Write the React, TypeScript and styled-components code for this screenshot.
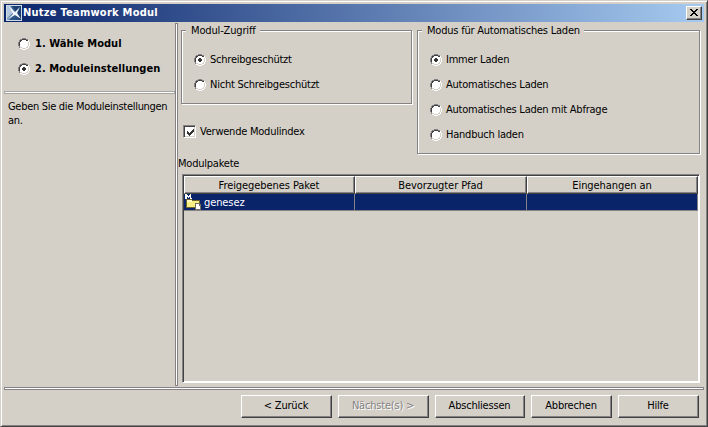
import React from 'react';
import styled, { createGlobalStyle, css } from 'styled-components';

const face = '#d4d0c8';
const shadow = '#848284';
const dark = '#424142';
const navy = '#0a246a';

const GlobalStyle = createGlobalStyle`
  *, *::before, *::after { box-sizing: border-box; }
  body { margin: 0; overflow: hidden; }
`;

const Window = styled.div`
  display: flex;
  flex-direction: column;
  width: 708px;
  height: 427px;
  padding: 2px;
  background: ${face};
  border: 1px solid ${face};
  border-right-color: ${dark};
  border-bottom-color: ${dark};
  box-shadow: inset 1px 1px #fff, inset -1px -1px ${shadow};
  font: 11px/13px "DejaVu Sans Condensed", "DejaVu Sans", sans-serif;
  letter-spacing: -0.22px;
  color: #000;
  cursor: default;
`;

const TitleBar = styled.header`
  display: flex;
  align-items: center;
  flex: none;
  height: 18px;
  margin: 1px 0 0 1px;
  width: 700px;
  padding: 0 2px;
  background: linear-gradient(90deg, ${navy}, #a6caf0);
`;

const Title = styled.h1`
  flex: 1;
  margin: 0 0 0 1px;
  font: bold 11px/14px "DejaVu Sans Condensed", "DejaVu Sans", sans-serif;
  letter-spacing: 0.25px;
  color: #fff;
`;

const raised = css`
  background: ${face};
  border: 1px solid;
  border-color: #fff ${dark} ${dark} #fff;
  box-shadow: inset -1px -1px ${shadow};
`;

const CloseButton = styled.button`
  display: grid;
  place-items: center;
  width: 16px;
  height: 14px;
  padding: 0 1px 1px 0;
  ${raised}
`;

const Body = styled.div`
  display: grid;
  grid-template-columns: 171px 3px 1fr;
  flex: none;
  height: 364px;
  margin: 1px 0 0 1px;
`;

const Sidebar = styled.aside`
  display: flex;
  flex-direction: column;
`;

const Steps = styled.div`
  display: flex;
  flex-direction: column;
  gap: 12px;
  height: 68px;
  padding: 14px 0 0 14px;
`;

const Hint = styled.p`
  margin: 0;
  padding: 6px 0 0 4px;
  line-height: 14px;
  letter-spacing: -0.3px;
`;

const Rule = styled.hr<{ $vertical?: boolean }>`
  flex: none;
  margin: 0;
  border: 1px solid ${shadow};
  background: #fff;
  ${(p) => (p.$vertical ? 'width: 3px; height: 363px;' : 'height: 3px; width: 100%;')}
`;

const StepRule = styled(Rule)`
  border-color: #a5a5a3;
`;

const BottomRule = styled(Rule)`
  width: 700px;
  margin-left: 1px;
`;

const Main = styled.main`
  display: flex;
  flex-direction: column;
  padding: 7px 0 0 3px;
`;

const Options = styled.div`
  display: grid;
  grid-template-columns: 231px 283px;
  column-gap: 5px;
`;

const Column = styled.div`
  display: flex;
  flex-direction: column;
`;

const Group = styled.section<{ $height: number }>`
  height: ${(p) => p.$height}px;
  border: 1px solid ${shadow};
  box-shadow: 1px 1px #fff, inset 1px 1px #fff;
  padding: 0 0 0 12px;
`;

const Legend = styled.h2<{ $spacing?: number }>`
  width: max-content;
  height: 14px;
  margin: -7px 0 15px -8px;
  padding: 0 4px 0 5px;
  background: ${face};
  font: inherit;
  line-height: 14px;
  letter-spacing: ${(p) => p.$spacing ?? -0.22}px;
`;

const OptionList = styled.div`
  display: flex;
  flex-direction: column;
  gap: 12px;
`;

const Choice = styled.label<{ $bold?: boolean }>`
  display: flex;
  align-items: center;
  gap: ${(p) => (p.$bold ? 5 : 4)}px;
  height: 13px;
  white-space: nowrap;
  font-weight: ${(p) => (p.$bold ? 'bold' : 'normal')};
  letter-spacing: ${(p) => (p.$bold ? 0.04 : -0.23)}px;
`;

const IndexChoice = styled(Choice)`
  margin: 21px 0 0 2px;
`;

const Check = styled.span`
  display: grid;
  place-items: center;
  width: 13px;
  height: 13px;
  padding: 1px 0 0 1px;
  background: #fff;
  border: 1px solid;
  border-color: ${shadow} #fff #fff ${shadow};
  box-shadow: inset 1px 1px ${dark}, inset -1px -1px ${face};
`;

const TableLabel = styled.div`
  margin: 3px 0 0 -3px;
  height: 13px;
`;

const Table = styled.div`
  width: 518px;
  height: 209px;
  margin: 4px 0 0 1px;
  border: 1px solid;
  border-color: ${shadow} #fff #fff ${shadow};
  box-shadow: inset 1px 1px ${dark}, inset -1px -1px #fff;
  padding: 1px;
`;

const Row = styled.div`
  display: grid;
  grid-template-columns: 171px 172px 171px;
`;

const HeaderCell = styled.div`
  display: grid;
  place-items: center;
  height: 18px;
  padding: 1px 1px 0 0;
  letter-spacing: -0.07px;
  ${raised}
`;

const Cell = styled.div`
  display: flex;
  align-items: center;
  gap: 3px;
  height: 17px;
  padding: 0 0 0 1px;
  background: ${navy};
  border: solid ${shadow};
  border-width: 0 1px 1px 0;
  color: #fff;
  letter-spacing: -0.1px;
`;

const Footer = styled.footer`
  display: flex;
  gap: 6px;
  padding: 5px 0 0 238px;
`;

const Button = styled.button<{ $width: number }>`
  width: ${(p) => p.$width}px;
  height: 23px;
  padding: 0 1px 2px 0;
  font: inherit;
  letter-spacing: -0.2px;
  color: #000;
  ${raised}

  &:disabled {
    color: ${shadow};
    text-shadow: 1px 1px #fff;
  }
`;

function Radio({ checked }: { checked?: boolean }) {
  return (
    <svg width="12" height="12" viewBox="0 0 12 12" shapeRendering="crispEdges">
      <path d="M4 1h4v1h2v2h1v4h-1v2H8v1H4v-1H2V8H1V4h1V2h2z" fill="#fff" />
      <path d="M4 0h4v1H4zM2 1h2v1H2zM8 1h2v1H8zM1 2h1v2H1zM0 4h1v4H0zM1 8h1v2H1z" fill={shadow} />
      <path d="M4 1h4v1H4zM2 2h2v1H2zM8 2h2v1H8zM2 3h1v1H2zM1 4h1v4H1z" fill={dark} />
      <path d="M10 2h1v2h-1zM11 4h1v4h-1zM10 8h1v2h-1zM8 10h2v1H8zM4 11h4v1H4zM2 10h2v1H2z" fill="#fff" />
      <path d="M10 4h1v4h-1zM9 8h1v1H9zM8 9h2v1H8zM4 10h4v1H4zM2 9h2v1H2z" fill={face} />
      {checked && <path d="M5 4h2v1h1v2H7v1H5V7H4V5h1z" fill="#363536" />}
    </svg>
  );
}

function AppIcon() {
  return (
    <svg width="16" height="16" viewBox="0 0 16 16">
      <defs>
        <linearGradient id="sky" x1="0" y1="0" x2="1" y2="0">
          <stop offset="0" stopColor="#8fabc8" />
          <stop offset="0.4" stopColor="#3d648f" />
          <stop offset="1" stopColor="#15386a" />
        </linearGradient>
      </defs>
      <path d="M0 0h16v16H0z" fill="#cfdbe7" />
      <path d="M1 1h14v14H1z" fill="url(#sky)" />
      <path d="M1 1h3l4 6-7 6z" fill="#b3c8dc" />
      <path d="M6 1h8l-4 5z" fill="#1d4172" />
      <path d="M3 1l6 6 5-5-3 6 4 6-6-4-7 4 5-5z" fill="#f2f7fb" />
      <path d="M3 15l6-4 3 4z" fill="#2a5283" />
    </svg>
  );
}

function PackageIcon() {
  return (
    <svg width="16" height="16" viewBox="0 0 16 16" shapeRendering="crispEdges">
      <path d="M1 5h6v1h8v8H1z" fill="#6b652e" />
      <path d="M2 6h5v1h7v6H2z" fill="#f7ef84" />
      <path d="M2 6h5v2H2z" fill="#fffbc0" />
      <path d="M10 9h4l2 2v5h-6z" fill="#736d62" />
      <path d="M11 10h3v2h1v3h-4z" fill="#fff" />
      <path d="M0 0h2v1h1v1h1V1h1V0h1v5H5V3H4v1H3V3H2v2H0zM6 4h1v1H6z" fill="#fff" />
    </svg>
  );
}

const modes = ['Immer Laden', 'Automatisches Laden', 'Automatisches Laden mit Abfrage', 'Handbuch laden'];

export default function App() {
  return (
    <>
      <GlobalStyle />
      <Window>
        <TitleBar>
          <AppIcon />
          <Title>Nutze Teamwork Modul</Title>
          <CloseButton aria-label="Schließen">
            <svg width="8" height="7" viewBox="0 0 8 7" shapeRendering="crispEdges">
              <path d="M0 0h2v1h1v1h2V1h1V0h2v1H7v1H6v1H5v1h1v1h1v1h1v1H6V6H5V5H3v1H2v1H0V6h1V5h1V4h1V3H2V2H1V1H0z" />
            </svg>
          </CloseButton>
        </TitleBar>
        <Body>
          <Sidebar>
            <Steps>
              <Choice $bold><Radio />1. Wähle Modul</Choice>
              <Choice $bold><Radio checked />2. Moduleinstellungen</Choice>
            </Steps>
            <StepRule />
            <Hint>Geben Sie die Moduleinstellungen<br />an.</Hint>
          </Sidebar>
          <Rule $vertical />
          <Main>
            <Options>
              <Column>
                <Group $height={74}>
                  <Legend $spacing={-0.15}>Modul-Zugriff</Legend>
                  <OptionList>
                    <Choice><Radio checked />Schreibgeschützt</Choice>
                    <Choice><Radio />Nicht Schreibgeschützt</Choice>
                  </OptionList>
                </Group>
                <IndexChoice>
                  <Check>
                    <svg width="7" height="7" viewBox="0 0 7 7" shapeRendering="crispEdges">
                      <path d="M0 2h1v1h1v1h1V3h1V2h1V1h1V0h1v3H6v1H5v1H4v1H3v1H2V6H1V5H0z" fill="#333" />
                    </svg>
                  </Check>
                  Verwende Modulindex
                </IndexChoice>
              </Column>
              <Group $height={124}>
                <Legend>Modus für Automatisches Laden</Legend>
                <OptionList>
                  {modes.map((mode, i) => (
                    <Choice key={mode}><Radio checked={i === 0} />{mode}</Choice>
                  ))}
                </OptionList>
              </Group>
            </Options>
            <TableLabel>Modulpakete</TableLabel>
            <Table>
              <Row>
                <HeaderCell>Freigegebenes Paket</HeaderCell>
                <HeaderCell>Bevorzugter Pfad</HeaderCell>
                <HeaderCell>Eingehangen an</HeaderCell>
              </Row>
              <Row>
                <Cell><PackageIcon />genesez</Cell>
                <Cell />
                <Cell />
              </Row>
            </Table>
          </Main>
        </Body>
        <BottomRule />
        <Footer>
          <Button $width={91}>&lt; Zurück</Button>
          <Button $width={91} disabled>Nächste(s) &gt;</Button>
          <Button $width={90}>Abschliessen</Button>
          <Button $width={81}>Abbrechen</Button>
          <Button $width={81}>Hilfe</Button>
        </Footer>
      </Window>
    </>
  );
}
